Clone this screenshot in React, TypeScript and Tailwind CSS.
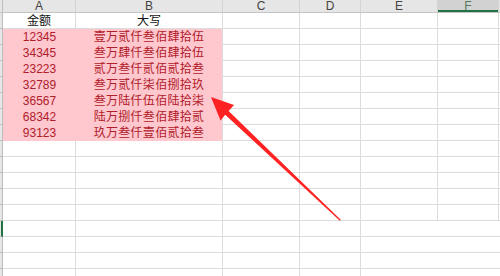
const colW = ['w-[73px]', 'w-[147px]', 'w-[77px]', 'w-[61px]', 'w-[77px]', 'w-[61px]']
const letters = ['A', 'B', 'C', 'D', 'E', 'F']

const data = [
  ['12345', '壹万贰仟叁佰肆拾伍'],
  ['34345', '叁万肆仟叁佰肆拾伍'],
  ['23223', '贰万叁仟贰佰贰拾叁'],
  ['32789', '叁万贰仟柒佰捌拾玖'],
  ['36567', '叁万陆仟伍佰陆拾柒'],
  ['68342', '陆万捌仟叁佰肆拾贰'],
  ['93123', '玖万叁仟壹佰贰拾叁'],
]

const font = { fontFamily: '"Liberation Sans", "Noto Sans CJK SC", sans-serif' }

const HeaderRow = () => (
  <div className="flex h-[13px] bg-[#e6e6e6] border-b border-[#c4c4c4]">
    <div className="w-[3px] shrink-0 border-r border-[#bdbdbd]" />
    {letters.map((l, i) => (
      <div
        key={l}
        className={`${colW[i]} shrink-0 border-r border-[#d4d4d4] flex items-center justify-center text-[12px] leading-[12px] ${l === 'F' ? 'bg-[#d2d2d2] shadow-[inset_0_-2px_0_#217346] text-[#4f7a5c]' : 'text-[#444]'}`}
      >
        {l}
      </div>
    ))}
    <div className="flex-1" />
  </div>
)

const Strip = ({ selected }: { selected?: boolean }) => (
  <div className={`w-[3px] shrink-0 bg-[#e6e6e6] border-b border-[#b8b8b8] ${selected ? 'border-r-2 border-r-[#217346]' : 'border-r border-[#bdbdbd]'}`} />
)

const EmptyRow = ({ row }: { row: number }) => (
  <div className="flex h-[16px]">
    <Strip selected={row === 14} />
    {colW.map((w, i) => (
      <div
        key={i}
        className={`${w} shrink-0 border-b border-[#dcdcdc] ${i >= 4 && row >= 14 ? '' : 'border-r'} border-r-[#dcdcdc]`}
      />
    ))}
    <div className="flex-1 border-b border-[#dcdcdc]" />
  </div>
)

export default function App() {
  return (
    <div className="w-[500px] h-[276px] overflow-hidden bg-white relative" style={font}>
      <HeaderRow />
      <div className="flex h-[16px]">
        <Strip />
        <div className={`${colW[0]} shrink-0 border-r border-b border-[#dcdcdc] flex items-center justify-center text-[12px] text-[#111]`}>金额</div>
        <div className={`${colW[1]} shrink-0 border-r border-b border-[#dcdcdc] flex items-center justify-center text-[12px] text-[#111]`}>大写</div>
        {colW.slice(2).map((w, i) => (
          <div key={i} className={`${w} shrink-0 border-r border-b border-[#dcdcdc]`} />
        ))}
        <div className="flex-1 border-b border-[#dcdcdc]" />
      </div>
      {data.map(([num, text]) => (
        <div key={num} className="flex h-[16px]">
          <Strip />
          <div className={`${colW[0]} shrink-0 bg-[#ffc7ce] flex items-center justify-center text-[12px] text-[#b0202a]`}>{num}</div>
          <div className={`${colW[1]} shrink-0 bg-[#ffc7ce] border-r border-[#dcdcdc] flex items-center justify-center text-[12px] text-[#b0202a] tracking-[0.3px]`}>{text}</div>
          {colW.slice(2).map((w, i) => (
            <div key={i} className={`${w} shrink-0 border-r border-b border-[#dcdcdc]`} />
          ))}
          <div className="flex-1 border-b border-[#dcdcdc]" />
        </div>
      ))}
      {[9, 10, 11, 12, 13, 14, 15, 16, 17].map((r) => (
        <EmptyRow key={r} row={r} />
      ))}

      <svg className="absolute left-0 top-0" width="500" height="276">
        <polygon
          points="211,97 234,105 228.6,111 341,220 339.6,220.6 225.2,114.8 220.5,120.5"
          fill="#ff2222"
        />
      </svg>
    </div>
  )
}
